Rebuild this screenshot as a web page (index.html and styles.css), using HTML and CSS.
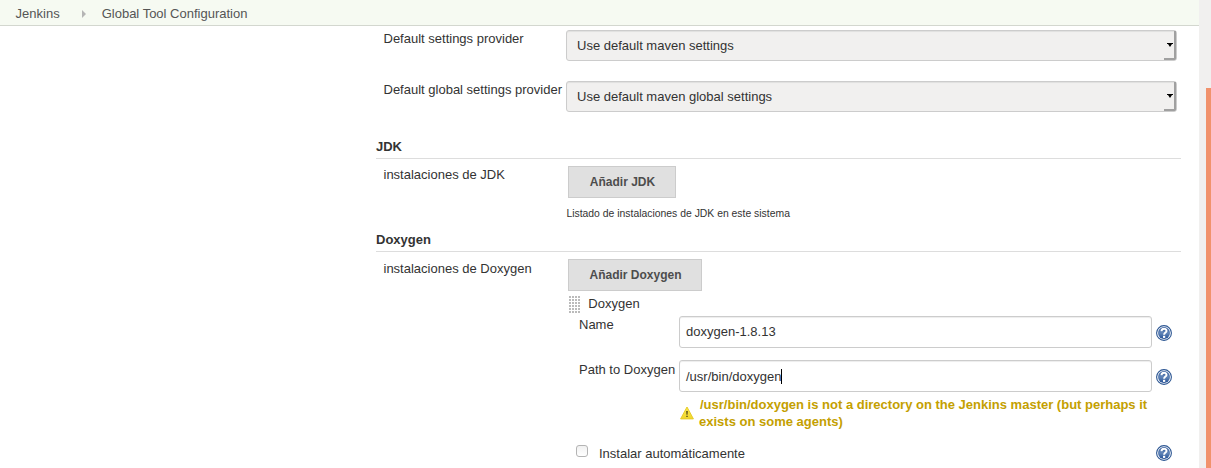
FILE: index.html
```html
<!DOCTYPE html>
<html lang="es">
<head>
<meta charset="utf-8">
<title>Global Tool Configuration [Jenkins]</title>
<link rel="stylesheet" href="styles.css">
</head>
<body>
<svg width="0" height="0" class="defs" aria-hidden="true">
  <defs>
    <linearGradient id="blue" x1="0" y1="0" x2="0" y2="1"><stop offset="0" stop-color="#2c5598"/><stop offset=".5" stop-color="#6386b8"/><stop offset="1" stop-color="#234f94"/></linearGradient>
    <linearGradient id="yellow" x1="0" y1="0" x2="0" y2="1"><stop offset="0" stop-color="#fbe94e"/><stop offset="1" stop-color="#f0d62c"/></linearGradient>
    <symbol id="help" viewBox="0 0 16 16">
      <circle cx="8" cy="8" r="7.4" fill="#fff" stroke="#2b5592" stroke-width="1.1"/>
      <circle cx="8" cy="8" r="6" fill="url(#blue)"/>
      <path d="M5.5 6.2C5.5 2.9 10.5 2.9 10.5 5.9C10.5 7.6 8.1 7.6 8.1 9.8" fill="none" stroke="#fff" stroke-width="2"/>
      <rect x="7" y="10.8" width="2.2" height="2.1" fill="#fff"/>
    </symbol>
  </defs>
</svg>
<div class="window">
  <div class="page">
    <nav class="breadcrumbs">
      <span>Jenkins</span>
      <svg class="crumb-arrow" width="4" height="8" viewBox="0 0 4 8"><path d="M0 0L4 4L0 8Z" fill="#b5b5b5"/></svg>
      <span>Global Tool Configuration</span>
    </nav>
    <main class="config">
      <div class="row row-select">
        <label class="label">Default settings provider</label>
        <div class="select"><span>Use default maven settings</span><span class="select-button"><svg width="7" height="4" viewBox="0 0 7 4"><path d="M0 0H6V1H5L3 4L1 1H0Z"/></svg></span></div>
      </div>
      <div class="row row-select">
        <label class="label">Default global settings provider</label>
        <div class="select"><span>Use default maven global settings</span><span class="select-button"><svg width="7" height="4" viewBox="0 0 7 4"><path d="M0 0H6V1H5L3 4L1 1H0Z"/></svg></span></div>
      </div>
      <h2 class="section">JDK</h2>
      <div class="row row-tool">
        <label class="label">instalaciones de JDK</label>
        <div class="tool">
          <button class="button button-jdk">Añadir JDK</button>
          <div class="description">Listado de instalaciones de JDK en este sistema</div>
        </div>
      </div>
      <h2 class="section">Doxygen</h2>
      <div class="row row-tool">
        <label class="label label-doxygen">instalaciones de Doxygen</label>
        <div class="tool">
          <button class="button button-doxygen">Añadir Doxygen</button>
          <div class="installer">
            <div class="installer-head"><span class="handle"></span><span>Doxygen</span></div>
            <div class="field">
              <label class="field-label">Name</label>
              <div class="input">doxygen-1.8.13</div>
              <svg class="help" width="16" height="16"><use href="#help"/></svg>
            </div>
            <div class="field field-path">
              <label class="field-label">Path to Doxygen</label>
              <div class="input">/usr/bin/doxygen<span class="caret"></span></div>
              <svg class="help" width="16" height="16"><use href="#help"/></svg>
            </div>
            <div class="warning">
              <svg class="warning-icon" width="14" height="14" viewBox="0 0 14 14"><path d="M7 1L13.4 12.9H.6Z" fill="url(#yellow)" stroke="#e6cb2a" stroke-linejoin="round"/><path d="M6.2 5H7.8L7.5 8.8H6.5ZM6.3 9.7H7.7V11H6.3Z" fill="#524817"/></svg>
              <div class="warning-text"><div class="warning-first">/usr/bin/doxygen is not a directory on the Jenkins master (but perhaps it</div><div>exists on some agents)</div></div>
            </div>
            <div class="auto">
              <span class="checkbox"></span>
              <span class="auto-label">Instalar automáticamente</span>
              <svg class="help-auto" width="16" height="16"><use href="#help"/></svg>
            </div>
          </div>
        </div>
      </div>
    </main>
  </div>
  <div class="scrollbar"><div class="thumb"></div></div>
</div>
</body>
</html>
```
FILE: styles.css
```css
* { box-sizing: border-box; }
body {
  margin: 0;
  overflow: hidden;
  background: #fff;
  color: #333;
  font: 13px/16px "Liberation Sans", Arial, sans-serif;
}
.defs { display: block; }
.window { display: flex; height: 468px; }
.page { flex: 1; min-width: 0; }
.breadcrumbs {
  display: flex;
  align-items: center;
  height: 26px;
  padding: 2px 0 0 15.6px;
  border-bottom: 1px solid #d3d7cf;
  background: #f6faf2;
  color: #555;
}
.crumb-arrow { margin: 0 16px 0 22px; }
.config { padding: 4px 18px 0 376px; }
.row { display: flex; }
.label { width: 190px; flex: none; padding-left: 7.5px; white-space: nowrap; }
.row-select { height: 51px; }
.row-select .label { padding-top: 1px; }
.select {
  display: flex;
  justify-content: space-between;
  width: 611px;
  height: 31px;
  padding-left: 10px;
  border: 1px solid #ccc;
  border-radius: 3px;
  background: #f1f0ef;
  box-shadow: inset 0 1px 1px rgba(0, 0, 0, .07);
  line-height: 30px;
}
.select-button {
  display: flex;
  justify-content: flex-end;
  align-items: center;
  width: 12px;
  border-right: 2px solid #a0a0a0;
  border-bottom: 2px solid #a0a0a0;
  border-bottom-right-radius: 2px;
}
.section {
  height: 27px;
  margin: 0;
  padding-top: 7px;
  border-bottom: 1px solid #ddd;
  font-size: 13px;
  line-height: 16px;
}
.row-tool { padding-top: 7px; }
.row-tool .label { padding-top: 1px; }
.row-tool .label-doxygen { padding-top: 2px; }
.tool { width: 615px; }
.button {
  display: block;
  height: 32px;
  margin: 0 0 0 2px;
  padding: 0 0 0 1px;
  border: 1px solid #ccc;
  background: #e0e0e0;
  color: #4d4d4d;
  font: bold 12px "Liberation Sans", Arial, sans-serif;
}
.button-jdk { width: 108px; }
.button-doxygen { width: 134px; }
.description { height: 27px; padding: 8px 0 0 .4px; font-size: 10.4px; line-height: 15px; }
.installer-head { display: flex; height: 25px; padding: 5px 0 0 3px; }
.handle {
  width: 12px;
  height: 18px;
  margin-right: 7.3px;
  background: radial-gradient(circle at 1px 1px, #bbb 0 .8px, transparent 1.3px) 0 0 / 3px 3px;
}
.field { display: flex; height: 44px; padding-left: 13px; }
.field-label { width: 100px; padding-top: 1px; }
.field-path .field-label { padding-top: 2px; }
.input {
  width: 473px;
  height: 32px;
  padding-left: 6px;
  border: 1px solid #ccc;
  border-radius: 3px;
  box-shadow: inset 0 1px 1px rgba(0, 0, 0, .075);
  line-height: 30px;
}
.field-path .input { line-height: 32px; }
.caret { display: inline-block; width: 1px; height: 15px; background: #000; vertical-align: -3px; }
.help { margin: 9px 0 0 4px; }
.warning {
  display: flex;
  height: 41px;
  padding-left: 114px;
  color: #c4a000;
  font-weight: bold;
  line-height: 17px;
  white-space: nowrap;
}
.warning-text { margin: -8px 0 0 5px; }
.warning-first { padding-left: 1px; }
.warning-icon { margin-top: 2px; }
.auto { display: flex; padding-left: 10px; }
.checkbox {
  width: 12px;
  height: 12px;
  border: 1px solid #b4b4b4;
  border-radius: 3px;
  background: linear-gradient(#f1f1f1, #fff);
}
.auto-label { margin-left: 11px; padding-top: 1px; }
.help-auto { margin: 0 9px 0 auto; }
.scrollbar { width: 12px; padding: 88px 0 0 7px; background: #f1f0ef; }
.thumb { height: 400px; background: #f1926c; }
```
